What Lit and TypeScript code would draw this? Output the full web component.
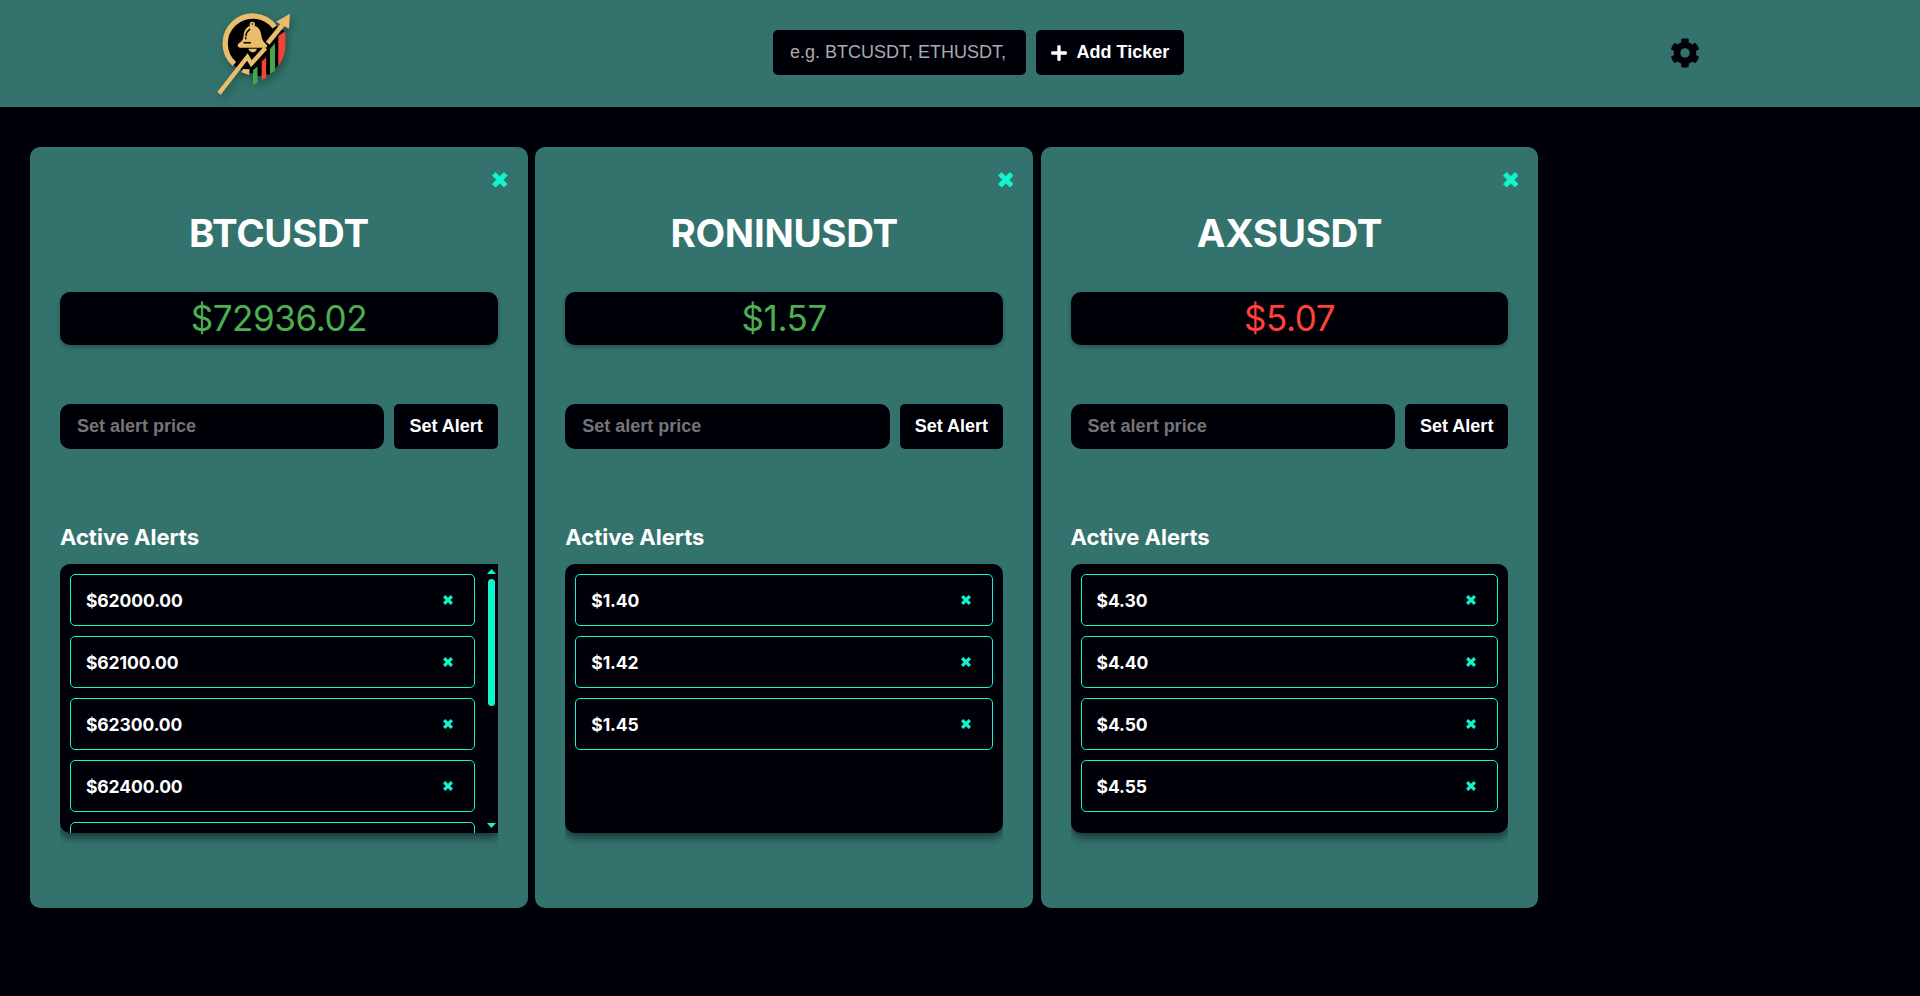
import { LitElement, html, css, svg } from "lit";
import { customElement, property } from "lit/decorators.js";
import { classMap } from "lit/directives/class-map.js";

interface Ticker {
  symbol: string;
  price: string;
  down?: boolean;
  scroll?: boolean;
  alerts: string[];
}

const TICKERS: Ticker[] = [
  {
    symbol: "BTCUSDT",
    price: "$72936.02",
    scroll: true,
    alerts: ["$62000.00", "$62100.00", "$62300.00", "$62400.00", ""],
  },
  { symbol: "RONINUSDT", price: "$1.57", alerts: ["$1.40", "$1.42", "$1.45"] },
  {
    symbol: "AXSUSDT",
    price: "$5.07",
    down: true,
    alerts: ["$4.30", "$4.40", "$4.50", "$4.55"],
  },
];

const crossPath = svg`<path d="M3.7 0.4L8 4.7L12.3 0.4L15.6 3.7L11.3 8L15.6 12.3L12.3 15.6L8 11.3L3.7 15.6L0.4 12.3L4.7 8L0.4 3.7z" stroke="#10f5cc" stroke-width="0.8" stroke-linejoin="round"/>`;

@customElement("ticker-card")
class TickerCard extends LitElement {
  @property({ attribute: false }) ticker!: Ticker;

  static styles = css`
    :host {
      display: block;
      box-sizing: border-box;
      height: 761px;
      padding: 20px 30px 0;
      border-radius: 10px;
      background: #34736d;
      font-family: Inter, "Open Sans", sans-serif;
      color: #fff;
    }
    svg {
      display: block;
      fill: #10f5cc;
    }
    .top {
      display: flex;
      justify-content: flex-end;
      align-items: center;
      height: 25px;
      margin-right: -10px;
    }
    .top svg {
      width: 15.6px;
      height: 15.6px;
    }
    .symbol {
      margin: 11px 0 29px;
      font-size: 38.5px;
      line-height: 60px;
      font-weight: 700;
      text-align: center;
      letter-spacing: -0.3px;
    }
    .price {
      height: 53px;
      line-height: 53px;
      border-radius: 10px;
      background: #000009;
      box-shadow: 0 2px 5px rgba(0, 0, 0, 0.3);
      text-align: center;
      font-size: 35px;
      font-weight: 400;
      letter-spacing: -0.4px;
      color: #4caf50;
    }
    .price.down {
      color: #ff4136;
    }
    .form {
      display: flex;
      gap: 10px;
      margin-top: 59px;
      height: 45px;
      font: bold 18px/45px "Liberation Sans", Arial, sans-serif;
    }
    .field {
      flex: 1;
      padding-left: 17px;
      border-radius: 10px;
      background: #000009;
      color: #757575;
    }
    .set {
      width: 103.4px;
      border-radius: 5px;
      background: #000009;
      text-align: center;
    }
    .title {
      margin: 73px 0 12px;
      font-size: 22px;
      line-height: 30px;
      font-weight: 700;
    }
    .clip {
      overflow: hidden;
      padding-bottom: 20px;
    }
    .list {
      display: flex;
      height: 269px;
      box-sizing: border-box;
      border-radius: 10px;
      background: #000009;
      box-shadow: 0 5px 8px rgba(0, 0, 0, 0.5);
    }
    .list.scroll {
      border-radius: 10px 0 0 10px;
    }
    .items {
      flex: 1;
      display: flex;
      flex-direction: column;
      gap: 10px;
      padding: 10px 10px 0;
      overflow: hidden;
    }
    .item {
      flex: none;
      display: flex;
      align-items: center;
      justify-content: space-between;
      box-sizing: border-box;
      height: 52px;
      padding: 0 21px 0 15px;
      border: 1px solid #10f5cc;
      border-radius: 5px;
      font-size: 17.5px;
      font-weight: 700;
      letter-spacing: -0.1px;
    }
    .item svg {
      width: 10px;
      height: 10px;
    }
    .bar {
      width: 13px;
      display: flex;
      flex-direction: column;
      padding: 5px 0;
      box-sizing: border-box;
    }
    .bar svg {
      width: 9px;
      height: 5px;
      margin-left: 2px;
    }
    .thumb {
      width: 7px;
      height: 127px;
      margin: 5px 0 auto 3px;
      border-radius: 4px;
      background: #10f5cc;
    }
  `;

  render() {
    const t = this.ticker;
    return html`
      <div class="top"><svg viewBox="0 0 16 16">${crossPath}</svg></div>
      <div class="symbol">${t.symbol}</div>
      <div class=${classMap({ price: true, down: !!t.down })}>${t.price}</div>
      <div class="form">
        <div class="field">Set alert price</div>
        <div class="set">Set Alert</div>
      </div>
      <div class="title">Active Alerts</div>
      <div class="clip">
        <div class=${classMap({ list: true, scroll: !!t.scroll })}>
          <div class="items">
            ${t.alerts.map(
              (a) => html`<div class="item">
                <span>${a}</span>
                <svg viewBox="0 0 16 16">${crossPath}</svg>
              </div>`
            )}
          </div>
          ${t.scroll
            ? html`<div class="bar">
                <svg viewBox="0 0 9 5"><path d="M4.5 0L9 5H0z" /></svg>
                <div class="thumb"></div>
                <svg viewBox="0 0 9 5"><path d="M4.5 5L9 0H0z" /></svg>
              </div>`
            : ""}
        </div>
      </div>
    `;
  }
}

@customElement("app-root")
class AppRoot extends LitElement {
  static styles = css`
    :host {
      display: block;
      height: 996px;
      overflow: hidden;
      background: #000009;
    }
    header {
      display: flex;
      align-items: center;
      height: 107px;
      padding-left: 200px;
      box-sizing: border-box;
      background: #34736d;
      font-family: "Liberation Sans", Arial, sans-serif;
      font-size: 18px;
    }
    .logo {
      width: 110px;
      height: 107px;
      margin-right: 463px;
      filter: drop-shadow(2px 3px 4px rgba(0, 0, 0, 0.35));
    }
    .query {
      box-sizing: border-box;
      width: 253px;
      height: 45px;
      margin: -2px 10px 0 0;
      padding: 0 17px;
      border-radius: 5px;
      background: #000009;
      color: #ababab;
      line-height: 45px;
      white-space: nowrap;
      overflow: hidden;
    }
    .add {
      display: flex;
      align-items: center;
      box-sizing: border-box;
      width: 148px;
      height: 45px;
      margin-top: -2px;
      padding-left: 14.5px;
      gap: 10px;
      border-radius: 5px;
      background: #000009;
      color: #fff;
      font-weight: bold;
      white-space: nowrap;
    }
    .add svg {
      width: 16px;
      height: 18px;
      fill: #fff;
    }
    .gear {
      width: 30px;
      height: 30px;
      margin: -2px 0 0 486px;
      fill: #000009;
    }
    main {
      display: grid;
      grid-template-columns: repeat(3, 497.8px);
      column-gap: 7.5px;
      padding: 40px 30px 0;
    }
  `;

  render() {
    return html`
      <header>
        <svg class="logo" viewBox="0 0 330 321">
          <path
            d="M158 46A86 86 0 0 0 105 199L126 211L160 221Q215 230 246 180L256 95L220 72A86 86 0 0 0 158 46z"
            fill="#000"
          />
          <path
            d="M224 81A82.5 82.5 0 1 0 103 192"
            fill="none"
            stroke="#e9bd6c"
            stroke-width="16"
          />
          <path d="M129 207L149 208L147 225L124 217z" fill="#e9bd6c" />
          <g fill="#e9bd6c">
            <circle cx="157" cy="73" r="8" />
            <path
              d="M157 77C139 77 133 91 131 105C130 119 126 124 115 131Q109 142 120 143H196Q206 141 198 132C188 124 186 118 184 105C181 87 173 77 157 77z"
            />
            <path d="M145 146H171Q167 157 158 157Q149 156 145 146z" />
          </g>
          <circle cx="157" cy="72" r="2.5" fill="#000" />
          <path
            d="M149 88Q139 95 138 107M137 113V116M132 128H151"
            fill="none"
            stroke="#000"
            stroke-width="4.5"
            stroke-linecap="round"
          />
          <path d="M159 211L173 199V247L159 255z" fill="#45a64c" />
          <path d="M173 199L185 184V228L173 228z" fill="#000" />
          <path d="M185 184L199 172V233L185 241z" fill="#f34336" />
          <path d="M199 172L210 148V222L199 224z" fill="#000" />
          <path d="M210 146L225 130V213L210 221z" fill="#45a64c" />
          <path d="M235 108L256 93V145Q252 178 235 198z" fill="#f34336" />
          <path
            d="M61 275L142 171L154 191L192 149"
            fill="none"
            stroke="#e9bd6c"
            stroke-width="13"
            stroke-linecap="square"
          />
          <path d="M203 130L248 74" stroke="#e9bd6c" stroke-width="14" />
          <path d="M270 41L267 86L228 65z" fill="#e9bd6c" />
        </svg>
        <div class="query">e.g. BTCUSDT, ETHUSDT,</div>
        <div class="add">
          <svg viewBox="0 0 448 512">
            <path
              d="M416 208H272V64c0-17.67-14.33-32-32-32h-32c-17.67 0-32 14.33-32 32v144H32c-17.67 0-32 14.33-32 32v32c0 17.67 14.33 32 32 32h144v144c0 17.67 14.33 32 32 32h32c17.67 0 32-14.33 32-32V304h144c17.67 0 32-14.33 32-32v-32c0-17.67-14.33-32-32-32z"
            />
          </svg>
          <span>Add Ticker</span>
        </div>
        <svg class="gear" viewBox="0 0 512 512">
          <path
            d="M487.4 315.7l-42.6-24.6c4.3-23.2 4.3-47 0-70.2l42.6-24.6c4.9-2.8 7.1-8.6 5.5-14-11.1-35.6-30-67.8-54.7-94.6-3.8-4.1-10-5.1-14.8-2.3L380.8 110c-17.9-15.4-38.5-27.3-60.8-35.1V25.8c0-5.6-3.9-10.5-9.4-11.7-36.7-8.2-74.3-7.8-109.2 0-5.5 1.2-9.4 6.1-9.4 11.7V75c-22.2 7.9-42.8 19.8-60.8 35.1L88.7 85.5c-4.9-2.8-11-1.9-14.8 2.3-24.7 26.7-43.6 58.9-54.7 94.6-1.7 5.4.6 11.2 5.5 14L67.3 221c-4.3 23.2-4.3 47 0 70.2l-42.6 24.6c-4.9 2.8-7.1 8.6-5.5 14 11.1 35.6 30 67.8 54.7 94.6 3.8 4.1 10 5.1 14.8 2.3l42.6-24.6c17.9 15.4 38.5 27.3 60.8 35.1v49.2c0 5.6 3.9 10.5 9.4 11.7 36.7 8.2 74.3 7.8 109.2 0 5.5-1.2 9.4-6.1 9.4-11.7v-49.2c22.2-7.9 42.8-19.8 60.8-35.1l42.6 24.6c4.9 2.8 11 1.9 14.8-2.3 24.7-26.7 43.6-58.9 54.7-94.6 1.5-5.5-.7-11.3-5.6-14.1zM256 336c-44.1 0-80-35.9-80-80s35.9-80 80-80 80 35.9 80 80-35.9 80-80 80z"
          />
        </svg>
      </header>
      <main>
        ${TICKERS.map((t) => html`<ticker-card .ticker=${t}></ticker-card>`)}
      </main>
    `;
  }
}
